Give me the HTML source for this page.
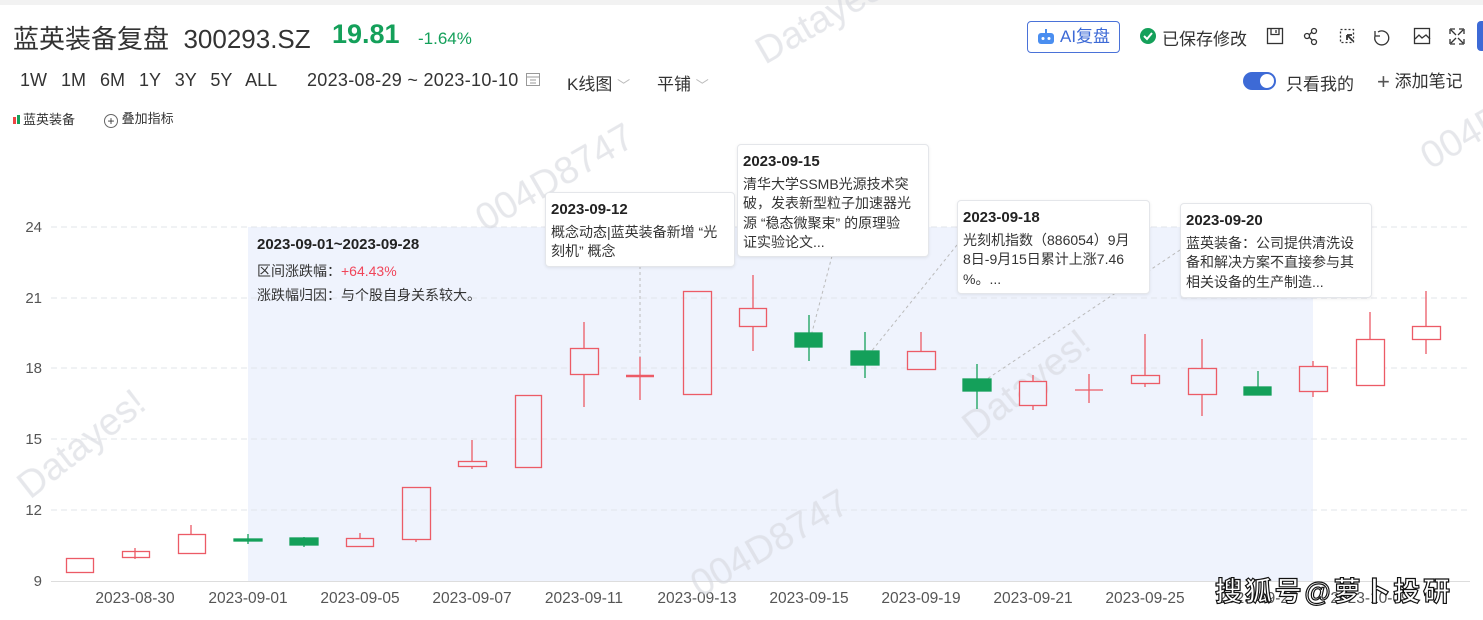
<!DOCTYPE html>
<html><head><meta charset="utf-8"><style>
body{margin:0;width:1483px;height:620px;overflow:hidden;background:#fff;font-family:"Liberation Sans","Noto Sans CJK SC",sans-serif;position:relative;color:#333}
.a{position:absolute;white-space:nowrap}
.tip{position:absolute;background:#fff;border:1px solid #e4e6ea;border-radius:4px;box-shadow:0 1px 3px rgba(0,0,0,.08);padding:7px 8px 0 5px;font-size:14px;line-height:19.5px;color:#333;white-space:nowrap;overflow:hidden}
.tip b{display:block;font-size:15px;margin-bottom:3px;color:#222}
</style></head><body>
<div class="a" style="left:0;top:0;width:1483px;height:5px;background:#f2f2f2"></div>
<div class="a" style="left:13px;top:19px;font-size:26px;color:#333">蓝英装备复盘&nbsp; 300293.SZ</div>
<div class="a" style="left:332px;top:19px;font-size:27px;font-weight:bold;color:#14a05a">19.81</div>
<div class="a" style="left:418px;top:29px;font-size:17px;color:#14a05a">-1.64%</div>
<div class="a" style="left:20px;top:70px;font-size:18px;color:#333;word-spacing:9px">1W 1M 6M 1Y 3Y 5Y ALL</div>
<div class="a" style="left:307px;top:70px;font-size:18px;color:#333;letter-spacing:0.3px">2023-08-29 ~ 2023-10-10</div>
<svg class="a" style="left:525px;top:71px" width="16" height="16"><rect x="1.5" y="2.5" width="13" height="12" fill="none" stroke="#999"/><line x1="1.5" y1="6" x2="14.5" y2="6" stroke="#999"/><line x1="5" y1="9" x2="11" y2="9" stroke="#999"/><line x1="5" y1="12" x2="11" y2="12" stroke="#999"/></svg>
<div class="a" style="left:567px;top:70px;font-size:17px">K线图 <span style="color:#bbb;font-size:13px">﹀</span></div>
<div class="a" style="left:657px;top:70px;font-size:17px">平铺 <span style="color:#bbb;font-size:13px">﹀</span></div>
<div class="a" style="left:13px;top:109px;font-size:13px"><span style="display:inline-block;width:3px;height:7px;background:#e44;margin-right:1px"></span><span style="display:inline-block;width:3px;height:9px;background:#14a05a;margin-right:3px"></span>蓝英装备</div>
<div class="a" style="left:104px;top:108px;font-size:13px"><span style="display:inline-block;width:12px;height:12px;border:1px solid #666;border-radius:50%;text-align:center;line-height:12px;font-size:12px;vertical-align:-2px">+</span> 叠加指标</div>
<div class="a" style="left:1027px;top:21px;width:91px;height:30px;border:1px solid #4a72d8;border-radius:4px;font-size:17px;color:#3d6ad6;line-height:30px;text-indent:32px">AI复盘</div>
<svg class="a" style="left:1037px;top:29px" width="18" height="16"><rect x="1" y="4" width="16" height="11" rx="3" fill="#4a8ef0"/><circle cx="6" cy="9.5" r="1.5" fill="#fff"/><circle cx="12" cy="9.5" r="1.5" fill="#fff"/><line x1="9" y1="0" x2="9" y2="4" stroke="#4a8ef0" stroke-width="2"/></svg>
<svg class="a" style="left:1139px;top:27px" width="18" height="18"><circle cx="9" cy="9" r="8" fill="#14a05a"/><path d="M5 9l3 3 5-6" stroke="#fff" stroke-width="2" fill="none"/></svg>
<div class="a" style="left:1162px;top:25px;font-size:17px">已保存修改</div>
<svg class="a" style="left:1266px;top:27px;" width="210" height="20" fill="none" stroke="#333" stroke-width="1.3">
<rect x="1.5" y="1.5" width="15" height="15"/><path d="M5 1.5v6h8v-6M10 3v3"/>
<circle cx="48" cy="4" r="2.5"/><circle cx="41" cy="9" r="2.5"/><circle cx="48" cy="15" r="2.5"/><path d="M43 8l3-3M43 10l3 3"/>
<rect x="74.5" y="2.5" width="13" height="13" stroke-dasharray="2 2"/><path d="M81 8l6 6M81 8v5M81 8h5" stroke-width="1.8"/>
<path d="M112 5a7 7 0 1 1-3 4M109 4v5h5"/>
<rect x="148.5" y="1.5" width="15" height="15"/><path d="M149 12l4-4 3 3 4-3 4 4"/>
<path d="M184 2h5M184 2v5M198 2h-5M198 2v5M184 17h5M184 17v-5M198 17h-5M198 17v-5M185 3l5 5M197 3l-5 5M185 16l5-5M197 16l-5-5"/>
</svg>
<div class="a" style="left:1477px;top:21px;width:10px;height:30px;background:#3d6ad6;border-radius:4px"></div>
<div class="a" style="left:1243px;top:72px;width:33px;height:18px;background:#3d6ad6;border-radius:9px"></div>
<div class="a" style="left:1260px;top:74px;width:14px;height:14px;background:#fff;border-radius:50%"></div>
<div class="a" style="left:1286px;top:70px;font-size:17px">只看我的</div>
<div class="a" style="left:1377px;top:67px;font-size:17px;color:#333"><span style="font-size:22px;font-weight:100;color:#555;vertical-align:-2px">+</span> 添加笔记</div>

<svg class="a" style="left:0;top:0" width="1483" height="620">
<rect x="248" y="227" width="1065" height="354" fill="#eff3fd"/>
<g stroke="#e2e4ea" stroke-dasharray="6 4"><line x1="51" y1="227" x2="1470" y2="227"/><line x1="51" y1="298" x2="1470" y2="298"/><line x1="51" y1="368" x2="1470" y2="368"/><line x1="51" y1="439" x2="1470" y2="439"/><line x1="51" y1="510" x2="1470" y2="510"/></g>
<line x1="51" y1="581.5" x2="1470" y2="581.5" stroke="#ddd"/>
<g font-size="15" fill="#555" text-anchor="end" font-family="Liberation Sans"><text x="42" y="232">24</text><text x="42" y="303">21</text><text x="42" y="373">18</text><text x="42" y="444">15</text><text x="42" y="515">12</text><text x="42" y="586">9</text></g>
<g font-size="15.5" fill="#555" text-anchor="middle" font-family="Liberation Sans"><text x="135" y="603">2023-08-30</text><text x="248" y="603">2023-09-01</text><text x="360" y="603">2023-09-05</text><text x="472" y="603">2023-09-07</text><text x="584" y="603">2023-09-11</text><text x="697" y="603">2023-09-13</text><text x="809" y="603">2023-09-15</text><text x="921" y="603">2023-09-19</text><text x="1033" y="603">2023-09-21</text><text x="1145" y="603">2023-09-25</text><text x="1258" y="603">2023-09-27</text><text x="1370" y="603">2023-10-09</text></g>
<g fill="#d5d8de" opacity=".6" font-size="38" font-family="Liberation Sans">
<text transform="translate(30,500) rotate(-38)">Datayes!</text>
<text transform="translate(485,232) rotate(-30)">004D8747</text>
<text transform="translate(700,598) rotate(-30)">004D8747</text>
<text transform="translate(975,440) rotate(-38)">Datayes!</text>
<text transform="translate(765,65) rotate(-30)">Datayes!</text>
<text transform="translate(1430,170) rotate(-30)">004D</text>
</g>
<g stroke="#bbb" stroke-dasharray="3 3"><line x1="640" y1="266" x2="640" y2="357"/><line x1="832" y1="256" x2="810" y2="340"/><line x1="957" y1="245" x2="866" y2="358"/><line x1="1180" y1="250" x2="978" y2="385"/></g>
<g stroke="#ec5b66" stroke-width="1.3" fill="none">
<rect x="66.5" y="558.5" width="27" height="14"/>
<line x1="135" y1="548" x2="135" y2="559"/><rect x="122.5" y="551.5" width="27" height="6"/>
<line x1="191" y1="525" x2="191" y2="534"/><rect x="178.5" y="534.5" width="27" height="19"/>
<line x1="360" y1="533" x2="360" y2="538"/><rect x="346.5" y="538.5" width="27" height="8"/>
<line x1="416" y1="539" x2="416" y2="542"/><rect x="402.5" y="487.5" width="28" height="52"/>
<line x1="472" y1="440" x2="472" y2="469"/><rect x="458.5" y="461.5" width="28" height="5" fill="#eff3fd"/>
<rect x="515.5" y="395.5" width="26" height="72"/>
<line x1="584" y1="322" x2="584" y2="407"/><rect x="570.5" y="348.5" width="28" height="26" fill="#eff3fd"/>
<line x1="640" y1="357" x2="640" y2="400"/><line x1="626" y1="376" x2="654" y2="376" stroke-width="2.5"/>
<rect x="683.5" y="291.5" width="28" height="103"/>
<line x1="753" y1="275" x2="753" y2="351"/><rect x="739.5" y="308.5" width="27" height="18" fill="#eff3fd"/>
<line x1="921" y1="332" x2="921" y2="351"/><rect x="907.5" y="351.5" width="28" height="18" fill="#eff3fd"/>
<line x1="1033" y1="375" x2="1033" y2="410"/><rect x="1019.5" y="381.5" width="27" height="24" fill="#eff3fd"/>
<line x1="1089" y1="374" x2="1089" y2="403"/><line x1="1075" y1="390" x2="1103" y2="390"/>
<line x1="1145" y1="334" x2="1145" y2="387"/><rect x="1131.5" y="375.5" width="28" height="8" fill="#eff3fd"/>
<line x1="1202" y1="339" x2="1202" y2="416"/><rect x="1188.5" y="368.5" width="28" height="26" fill="#eff3fd"/>
<line x1="1313" y1="361" x2="1313" y2="397"/><rect x="1299.5" y="366.5" width="28" height="25" fill="#eff3fd"/>
<line x1="1370" y1="312" x2="1370" y2="339"/><rect x="1356.5" y="339.5" width="28" height="46" fill="#fff"/>
<line x1="1426" y1="291" x2="1426" y2="354"/><rect x="1412.5" y="326.5" width="28" height="13" fill="#fff"/>
</g>
<g fill="#14a05a" stroke="#14a05a" stroke-width="1.3">
<line x1="248" y1="534" x2="248" y2="544"/><rect x="234" y="539" width="28" height="2"/>
<line x1="304" y1="537" x2="304" y2="547"/><rect x="290" y="538" width="28" height="7"/>
<line x1="809" y1="315" x2="809" y2="361"/><rect x="795" y="333" width="27" height="14"/>
<line x1="865" y1="332" x2="865" y2="378"/><rect x="851" y="351" width="28" height="14"/>
<line x1="977" y1="364" x2="977" y2="409"/><rect x="963" y="379" width="28" height="12"/>
<line x1="1258" y1="371" x2="1258" y2="387"/><rect x="1244" y="387" width="27" height="8"/>
</g>
<text x="1215" y="601" font-size="27" font-weight="bold" fill="#fff" stroke="#111" stroke-width="1.2" textLength="235" font-family="Liberation Sans,Noto Sans CJK SC,sans-serif">搜狐号@萝卜投研</text>
</svg>

<div class="a" style="left:257px;top:236px;font-size:15px;font-weight:bold;color:#222">2023-09-01~2023-09-28</div>
<div class="a" style="left:257px;top:261px;font-size:14px;color:#333">区间涨跌幅：<span style="color:#f0455a">+64.43%</span></div>
<div class="a" style="left:257px;top:285px;font-size:14px;color:#333">涨跌幅归因：与个股自身关系较大。</div>

<div class="tip" style="left:545px;top:192px;width:175px;height:66px"><b>2023-09-12</b>概念动态|蓝英装备新增 “光<br>刻机” 概念</div>
<div class="tip" style="left:737px;top:144px;width:177px;height:104px"><b>2023-09-15</b>清华大学SSMB光源技术突<br>破，发表新型粒子加速器光<br>源 “稳态微聚束” 的原理验<br>证实验论文...</div>
<div class="tip" style="left:957px;top:200px;width:178px;height:85px"><b>2023-09-18</b>光刻机指数（886054）9月<br>8日-9月15日累计上涨7.46<br>%。...</div>
<div class="tip" style="left:1180px;top:203px;width:177px;height:86px"><b>2023-09-20</b>蓝英装备：公司提供清洗设<br>备和解决方案不直接参与其<br>相关设备的生产制造...</div>
</body></html>
